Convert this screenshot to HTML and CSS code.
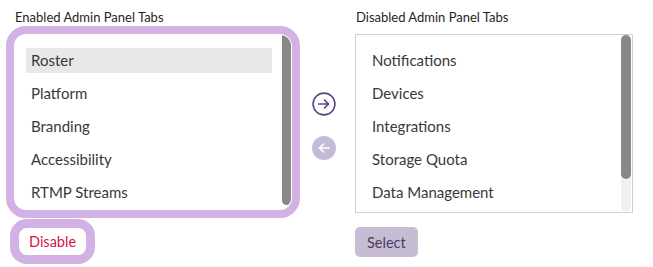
FILE: index.html
```html
<!DOCTYPE html>
<html lang="en">
<head>
    <meta charset="UTF-8">
    <title>Admin Panel Tabs</title>
    <link rel="stylesheet" href="styles.css">
</head>
<body>
    <div class="tabs">
        <div class="col col-left">
            <div class="label">Enabled Admin Panel Tabs</div>
            <div class="box box-focus">
                <ul class="list">
                    <li class="current">Roster</li>
                    <li>Platform</li>
                    <li>Branding</li>
                    <li>Accessibility</li>
                    <li>RTMP Streams</li>
                </ul>
                <div class="bar bar-left"><span class="thumb"></span></div>
            </div>
            <div class="actions">
                <button class="btn btn-disable">Disable</button>
            </div>
        </div>

        <div class="arrows">
            <span class="arrow arrow-on">
                <svg width="24" height="24" viewBox="0 0 24 24">
                    <circle cx="12" cy="12" r="10.9" fill="none" stroke="#5e4487" stroke-width="1.6"/>
                    <path d="M6.8 12h9.6M12.6 8.1l3.9 3.9-3.9 3.9" fill="none" stroke="#5e4487" stroke-width="1.7" stroke-linecap="round" stroke-linejoin="round"/>
                </svg>
            </span>
            <span class="arrow arrow-off">
                <svg width="24" height="24" viewBox="0 0 24 24">
                    <circle cx="12" cy="12" r="12" fill="#c6bbd5"/>
                    <path d="M17.2 12H7.6M11.4 8.1L7.5 12l3.9 3.9" fill="none" stroke="#fff" stroke-width="1.7" stroke-linecap="round" stroke-linejoin="round"/>
                </svg>
            </span>
        </div>

        <div class="col col-right">
            <div class="label">Disabled Admin Panel Tabs</div>
            <div class="box box-plain">
                <ul class="list">
                    <li>Notifications</li>
                    <li>Devices</li>
                    <li>Integrations</li>
                    <li>Storage Quota</li>
                    <li>Data Management</li>
                </ul>
                <div class="bar bar-right"><span class="thumb"></span></div>
            </div>
            <div class="actions">
                <button class="btn btn-select">Select</button>
            </div>
        </div>
    </div>
</body>
</html>
```

FILE: styles.css
```css
* {
    margin: 0;
    padding: 0;
    box-sizing: border-box;
}
ul, li {
    list-style: none;
}
html, body {
    height: 100%;
}
body {
    font-family: Lato, "Noto Sans", sans-serif;
    color: #2b2b2b;
    background-color: #fff;
}
.tabs {
    display: flex;
    padding: 9px 0 20px 14px;
}
.col {
    width: 278px;
}
.label {
    height: 16px;
    padding-left: 1px;
    font-size: 13px;
    line-height: 16px;
    color: #1f1f1f;
}
.box {
    display: flex;
    margin-top: 9px;
    background-color: #fff;
    overflow: hidden;
}
.box-focus {
    height: 176px;
    border: 1px solid #fff;
    border-radius: 12px;
    outline: 8px solid #d2b1e4;
}
.box-plain {
    height: 179px;
    border: 1px solid #cfcfcf;
}
.list {
    flex: 1;
    padding: 13px 10px 0 11px;
}
.list li {
    height: 25px;
    margin-bottom: 8px;
    padding-left: 5px;
    font-size: 15px;
    line-height: 25px;
    color: #393939;
}
.list li.current {
    background-color: #e8e8e8;
}
.bar {
    display: flex;
    flex-direction: column;
    width: 9px;
}
.bar-left .thumb {
    height: 170px;
    background-color: #888;
    border-radius: 0 0 5px 5px;
}
.bar-right {
    width: 10px;
    margin-right: 1px;
    background-color: #f0f0f0;
    border-radius: 5px;
}
.bar-right .thumb {
    height: 144px;
    background-color: #888;
    border-radius: 5px;
}
.arrows {
    display: flex;
    flex-direction: column;
    align-items: center;
    width: 63px;
    padding-top: 83px;
    gap: 20px;
}
.arrow {
    display: block;
    width: 24px;
    height: 24px;
}
.arrow svg {
    display: block;
}
.actions {
    display: flex;
}
.btn {
    font-family: Lato, "Noto Sans", sans-serif;
    font-size: 14.5px;
    border: none;
    cursor: pointer;
}
.btn-disable {
    height: 27px;
    margin: 18px 0 0 5px;
    padding: 0 10px;
    background-color: #fff;
    color: #d2164a;
    border-radius: 8px;
    outline: 9px solid #d2b1e4;
}
.btn-select {
    height: 30px;
    margin-top: 14px;
    padding: 0 12px;
    background-color: #c6bcd3;
    color: #4a3c60;
    border-radius: 5px;
}
```
